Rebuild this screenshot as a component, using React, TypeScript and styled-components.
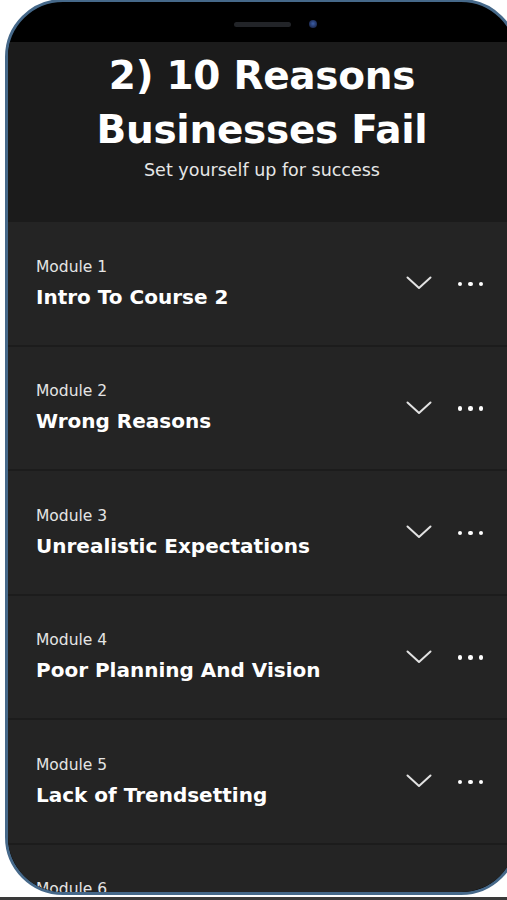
import React from 'react';
import styled, { createGlobalStyle } from 'styled-components';

const modules = [
    { label: 'Module 1', title: 'Intro To Course 2' },
    { label: 'Module 2', title: 'Wrong Reasons' },
    { label: 'Module 3', title: 'Unrealistic Expectations' },
    { label: 'Module 4', title: 'Poor Planning And Vision' },
    { label: 'Module 5', title: 'Lack of Trendsetting' },
    { label: 'Module 6', title: 'Ignoring The Numbers' },
];

const Global = createGlobalStyle`
    html, body {
        margin: 0;
        padding: 0;
        background: #ffffff;
        overflow: hidden;
    }
    body {
        font-family: "DejaVu Sans", "Noto Sans", sans-serif;
        height: 900px;
    }
`

const Chevron = () => (
    <svg width="26" height="14" viewBox="0 0 26 14" fill="none">
        <path d="M1.5 1.5 L13 12 L24.5 1.5" stroke="#e2e2e2" strokeWidth="2" strokeLinecap="round" strokeLinejoin="round" />
    </svg>
)

const App = () => {
    return <Page>
        <Global />
        <Phone>
            <Notch>
                <Speaker />
                <Camera />
            </Notch>
            <Header>
                <Title>2) 10 Reasons<br />Businesses Fail</Title>
                <Subtitle>Set yourself up for success</Subtitle>
            </Header>
            <List>
                {modules.map((m, i) => <Row key={i}>
                    <RowText>
                        <Label>{m.label}</Label>
                        <ModuleTitle>{m.title}</ModuleTitle>
                    </RowText>
                    <Actions>
                        <Chevron />
                        <Dots><span /><span /><span /></Dots>
                    </Actions>
                </Row>)}
            </List>
        </Phone>
        <BottomLine />
    </Page>
}

export default App;

const Page = styled.div`
    width: 507px;
    height: 900px;
    overflow: hidden;
    display: flex;
    flex-direction: column;
`

const Phone = styled.div`
    width: 508px;
    height: 890px;
    margin-left: 5px;
    margin-top: -1px;
    border: 3px solid #46698a;
    border-radius: 58px;
    background: #000;
    overflow: hidden;
    display: flex;
    flex-direction: column;
    flex-shrink: 0;
`

const Notch = styled.div`
    height: 40px;
    flex-shrink: 0;
    display: flex;
    align-items: center;
    justify-content: center;
    gap: 18px;
    padding-left: 27px;
    padding-top: 4px;
    box-sizing: border-box;
`

const Speaker = styled.div`
    width: 57px;
    height: 5px;
    border-radius: 3px;
    background: #222428;
`

const Camera = styled.div`
    width: 8px;
    height: 8px;
    border-radius: 50%;
    background: radial-gradient(circle at 50% 45%, #3b5ea8 0%, #1c2a52 70%);
`

const Header = styled.div`
    height: 180px;
    flex-shrink: 0;
    background: #1b1b1b;
    display: flex;
    flex-direction: column;
    align-items: center;
    padding-top: 7px;
    box-sizing: border-box;
`

const Title = styled.h1`
    margin: 0;
    color: #ffffff;
    font-size: 39px;
    line-height: 54px;
    font-weight: 700;
    text-align: center;
    letter-spacing: -0.3px;
`

const Subtitle = styled.div`
    margin-top: 1px;
    color: #e6e6e6;
    font-size: 17.5px;
    line-height: 24px;
`

const List = styled.div`
    flex: 1;
    background: #242424;
`

const Row = styled.div`
    height: 122.5px;
    border-bottom: 2px solid #1c1c1c;
    display: flex;
    align-items: center;
    padding: 0 33px 0 28px;
`

const RowText = styled.div`
    flex: 1;
    display: flex;
    flex-direction: column;
    gap: 7px;
`

const Label = styled.div`
    color: #e4e4e4;
    font-size: 15.5px;
    line-height: 20px;
`

const ModuleTitle = styled.div`
    color: #ffffff;
    font-size: 20px;
    line-height: 26px;
    font-weight: 700;
`

const Actions = styled.div`
    display: flex;
    align-items: center;
    gap: 26px;
`

const Dots = styled.div`
    display: flex;
    gap: 6px;
    padding-top: 1px;
    span {
        width: 4.5px;
        height: 4.5px;
        border-radius: 50%;
        background: #ffffff;
    }
`

const BottomLine = styled.div`
    margin-top: auto;
    height: 3px;
    background: #3a3a3a;
`
